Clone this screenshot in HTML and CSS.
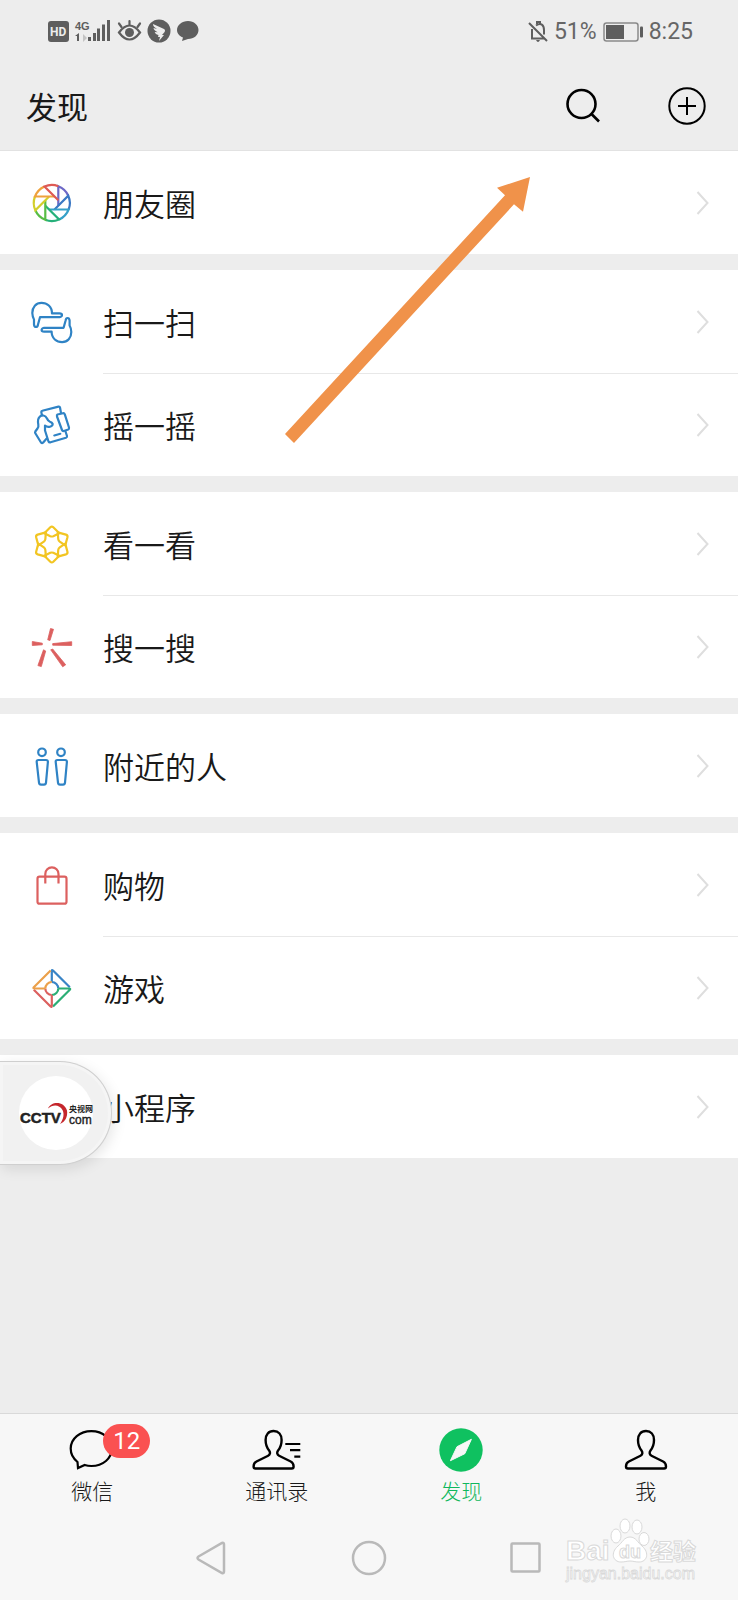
FILE: index.html
```html
<!DOCTYPE html>
<html lang="zh-CN">
<head>
<meta charset="utf-8">
<meta name="viewport" content="width=device-width, initial-scale=1">
<title>发现</title>
<link rel="stylesheet" href="styles.css">
</head>
<body>
<svg class="defs" aria-hidden="true">
  <symbol id="chevron" viewBox="0 0 14 26"><path d="M1.500 2l10 11-10 11" fill="none" stroke="#dedede" stroke-width="2"/></symbol>
  <path id="blade" d="M6.500 2.700V-16.800A18 18 0 0 1 16.500-7.300" fill="none" stroke-width="2.200"/>
  <path id="petal" d="M-1.500-17.200Q0-18.600 1.500-17.200L7.500-11.200L1.500-8.300Q0-7.700-1.500-8.300L-7.500-11.200Z"/>
  <path id="hand" d="M10 26.500L12 19.200H31.500Q34 18.600 34 17T31.500 15.400H24C24 8.500 19 4.800 13.500 4.800S4.300 9 4.300 15Q4.500 19 6 21.500V26.500Q6.300 29 8 29T10 26.500Z"/>
  <path id="person" d="M28.600 3c-5 0-8 3.500-8 9 0 5 1.500 8 3.500 10.500 1.500 2 1 4.200-1 5.200L11.500 33.500C9 34.700 8.600 36 8.600 38.500Q8.600 40.500 10.500 40.500H46.700Q48.600 40.500 48.600 38.500C48.600 36 48.200 34.700 45.700 33.500L34.100 27.700c-2-1-2.500-3.200-1-5.200 2-2.500 3.500-5.500 3.500-10.500 0-5.500-3-9-8-9z" fill="none" stroke="#000" stroke-width="2.400"/>
</svg>

<div class="status">
  <svg class="status-icons" viewBox="0 0 154 28" aria-label="HD 4G">
    <g fill="#5e5e5e">
      <rect x="0" y="4" width="21" height="21" rx="3"/>
      <text class="hd" x="2" y="19">HD</text>
      <text class="net" x="27" y="13">4G</text>
      <path d="M31 16v8h-2v-5h-2z"/><path d="M35 17v8l4-4z" fill="#c4c4c4"/>
      <rect x="40" y="20" width="3" height="4"/><rect x="45" y="16" width="3" height="8"/><rect x="49" y="11.500" width="3" height="12.500"/><rect x="54" y="7.500" width="3" height="16.500"/><rect x="59" y="3" width="3" height="21"/>
      <circle cx="81.500" cy="15.500" r="4.500"/>
      <circle cx="111" cy="14" r="11.500"/>
      <path d="M140 4c6 0 10.500 4 10.500 9s-4.500 9-10.500 9l-6 2 1-3.500c-3.500-1.500-6-4-6-7.500 0-5 5-9 11-9z"/>
    </g>
    <g fill="none" stroke="#5e5e5e" stroke-width="2.200" stroke-linecap="round">
      <path d="M71 15.500Q81.500 1.500 92 15.500Q81.500 29.500 71 15.500z"/>
      <path d="M81.500 4v3.500M71 6.500l2.500 3.500M92 6.500L89.500 10"/>
    </g>
    <path d="M105 7l11 5c1.500.8 1 2 .6 3l-2.600 3h2l-5 6 1-4h-2l.5-2c-2.500-.5-3.500-2-3.800-3l3 .3c-2.500-1.300-4-2.500-4.200-4.300l3.500 1c-2.500-1.500-4-3-4-5z" fill="#ededed"/>
  </svg>
  <div class="status-right">
    <svg class="bell" viewBox="0 0 20 22"><g fill="none" stroke="#5e5e5e" stroke-width="2"><path d="M1 2l18 18M3 17.500h14M4 17V8M8 4.500C13 1 16 4 16 9v4.500M9 3V1h3v2"/></g><path d="M8 19h4q-2 4-4 0" fill="#5e5e5e"/></svg>
    <span>51%</span>
    <svg class="battery" viewBox="0 0 40 20"><rect x="1" y="1" width="34" height="18" rx="2.500" fill="none" stroke="#8a8a8a" stroke-width="1.500"/><rect x="3" y="3" width="18" height="14" fill="#5e5e5e"/><rect x="37" y="4.500" width="3" height="11" rx="1" fill="#5e5e5e"/></svg>
    <time>8:25</time>
  </div>
</div>

<header class="header">
  <h1>发现</h1>
  <div class="actions">
    <button aria-label="搜索"><svg viewBox="0 0 40 40"><g fill="none" stroke="#000" stroke-width="2.600"><circle cx="18.500" cy="18" r="14"/><path d="M28 27.500l8 8"/></g></svg></button>
    <button aria-label="添加"><svg viewBox="0 0 40 40"><g fill="none" stroke="#000" stroke-width="2"><circle cx="20" cy="20" r="17.700"/><path d="M20 11v18M11 20h18"/></g></svg></button>
  </div>
</header>

<main class="list">
  <section>
    <a class="row" href="#moments">
      <svg class="icon" viewBox="0 0 48 48"><g transform="translate(23.800 24)"><use href="#blade" stroke="#6d68c6"/><use href="#blade" stroke="#3b78c4" transform="rotate(45)"/><use href="#blade" stroke="#35a0c8" transform="rotate(90)"/><use href="#blade" stroke="#26b07a" transform="rotate(135)"/><use href="#blade" stroke="#58bd45" transform="rotate(180)"/><use href="#blade" stroke="#d3cf2c" transform="rotate(225)"/><use href="#blade" stroke="#efa23c" transform="rotate(270)"/><use href="#blade" stroke="#de5a55" transform="rotate(315)"/></g></svg>
      <span>朋友圈</span><svg class="chevron"><use href="#chevron"/></svg>
    </a>
  </section>
  <section>
    <a class="row" href="#scan">
      <svg class="icon" viewBox="0 0 48 48"><g fill="none" stroke="#2f83c5" stroke-width="2.200" stroke-linejoin="round"><use href="#hand"/><use href="#hand" transform="rotate(180 23.800 24.500)"/></g></svg>
      <span>扫一扫</span><svg class="chevron"><use href="#chevron"/></svg>
    </a>
    <a class="row" href="#shake">
      <svg class="icon" viewBox="0 0 48 48"><g fill="none" stroke="#2f83c5" stroke-width="2.200" stroke-linejoin="round" stroke-linecap="round"><path d="M14 14.500L13.300 11Q13.300 10 14.300 9.800L30.500 5.600Q31.800 5.400 32 6.500L33 12"/><path d="M29.500 13.500L35 12.200Q36.300 12 36.800 13.300L41 26.500Q41.300 28 40.200 28.500L35.800 30Q34.500 30.300 34 29L29 15.500Q28.600 14 29.500 13.500Z"/><path d="M37.500 30.500L39 35Q39.200 36.300 38 36.800L22.500 41.300Q21 41.600 20.500 40.500L17 29.500V24.500Q19 26.500 22 25.700Q25 24.800 24.600 22.800Q24 21.500 22 20.800Q20 20 19 17.500C17.500 14 13.500 13.500 11.500 16C9.600 18 9.700 20.500 10.300 23.500Q10.800 26 9.500 27.500L7.300 30.500Q6.700 31.500 7.500 32.500L13 41.500Q14 42.500 15 41.700L18.700 37.500"/><path d="M26.300 34.500l6-1.700"/></g></svg>
      <span>摇一摇</span><svg class="chevron"><use href="#chevron"/></svg>
    </a>
  </section>
  <section>
    <a class="row" href="#look">
      <svg class="icon" viewBox="0 0 48 48"><g transform="translate(23.800 24.500)" fill="none" stroke="#f2c522" stroke-width="2.200" stroke-linejoin="round"><use href="#petal"/><use href="#petal" transform="rotate(60)"/><use href="#petal" transform="rotate(120)"/><use href="#petal" transform="rotate(180)"/><use href="#petal" transform="rotate(240)"/><use href="#petal" transform="rotate(300)"/></g></svg>
      <span>看一看</span><svg class="chevron"><use href="#chevron"/></svg>
    </a>
    <a class="row" href="#search">
      <svg class="icon" viewBox="0 0 48 48"><path fill="#dc605f" stroke="#dc605f" stroke-width=".8" stroke-linejoin="round" d="M22.500 5.500l3 .8L22 17.500l-2.300-.7zM4.300 18.500l10 1.700v1.600l-10 .7zM24.700 20.600l19-1.900v3.800l-19-.3zM15.500 26.800l2.200 1.200-4.400 15.600-3.400-1zM22.700 26.800l2-.8 13 15.800-3 2z"/></svg>
      <span>搜一搜</span><svg class="chevron"><use href="#chevron"/></svg>
    </a>
  </section>
  <section>
    <a class="row" href="#nearby">
      <svg class="icon" viewBox="0 0 48 48"><g fill="none" stroke="#2f83c5" stroke-width="2.200" stroke-linejoin="round"><circle cx="14" cy="10.300" r="3.800"/><circle cx="33" cy="10.300" r="3.800"/><path id="body" d="M10.500 18h7.500q2 0 1.900 2l-1.900 20.700q-.2 2-2 2h-3q-1.800 0-2-2L8.700 20q-.2-2 1.800-2z"/><use href="#body" x="19"/></g></svg>
      <span>附近的人</span><svg class="chevron"><use href="#chevron"/></svg>
    </a>
  </section>
  <section>
    <a class="row" href="#shop">
      <svg class="icon" viewBox="0 0 48 48"><g fill="none" stroke="#dc605f" stroke-width="2.200"><rect x="9.500" y="15.700" width="29" height="27" rx="2"/><path d="M17.300 22.500V13a6.600 6.600 0 0 1 13.200 0v9.500"/></g></svg>
      <span>购物</span><svg class="chevron"><use href="#chevron"/></svg>
    </a>
    <a class="row" href="#games">
      <svg class="icon" viewBox="0 0 48 48"><g transform="translate(23.800 24.500)" fill="none" stroke-width="2.200" stroke-linejoin="round"><path stroke="#3984c6" d="M0-6.500V-17.500Q0-19 1.200-18L18-1.200M0-6.500A6.500 6.500 0 0 1 6.500 0"/><path stroke="#2bae75" d="M6.500 0H17.500Q19 0 18 1.200L1.200 18M6.500 0A6.500 6.500 0 0 1 0 6.500"/><path stroke="#dc605f" d="M0 6.500V17.500Q0 19-1.200 18L-18 1.200M0 6.500A6.500 6.500 0 0 1-6.500 0"/><path stroke="#eba04a" d="M-6.500 0H-17.500Q-19 0-18-1.200L-1.200-18M-6.500 0A6.500 6.500 0 0 1 0-6.500"/></g></svg>
      <span>游戏</span><svg class="chevron"><use href="#chevron"/></svg>
    </a>
  </section>
  <section class="mini">
    <a class="row" href="#mini">
      <i class="icon"></i>
      <span>小程序</span><svg class="chevron"><use href="#chevron"/></svg>
    </a>
    <button class="float" aria-label="CCTV.com 央视网">
      <svg viewBox="0 0 76 76"><circle cx="38" cy="37" r="37" fill="#fff"/><path d="M30 32.500C33 25 46 24.500 49 34.500C50 41 47 46 42 48C45.500 43 46.500 38 44.500 34C41.500 28.500 35 28 30 32.500z" fill="#c5262c"/><text class="cctv" x="2" y="47">CCTV</text><text class="com" x="51" y="48">com</text><text class="cn" x="51" y="36">央视网</text></svg>
    </button>
  </section>
</main>

<footer class="footer">
  <nav class="tabs">
    <a href="#chats"><span class="tab-icon"><svg viewBox="0 0 64 44"><path d="M31.400 3.200c11.500 0 20.400 7.500 20.400 17.400S43 38 31.400 38c-2.500 0-4.500-.3-6.700-1L18 40l-.5-6c-4.200-3.300-6.800-8-6.800-13.400 0-9.900 9.200-17.400 20.700-17.400z" fill="none" stroke="#000" stroke-width="2.200"/></svg><b class="badge">12</b></span>微信</a>
    <a href="#contacts"><span class="tab-icon"><svg viewBox="0 0 64 44"><use href="#person"/><path d="M40.300 16h15M45 22.200h10.300M49.300 28.700h6" stroke="#000" stroke-width="2.200"/></svg></span>通讯录</a>
    <a class="active" href="#discover"><span class="tab-icon"><svg viewBox="0 0 64 44"><circle cx="32" cy="22" r="21.700" fill="#0fc160"/><path d="M42.400 11.300L35.800 25.700 21.400 32.700 28 18.700z" fill="#f7f7f7" stroke="#f7f7f7" stroke-linejoin="round"/></svg></span>发现</a>
    <a href="#me"><span class="tab-icon"><svg viewBox="0 0 64 44"><use href="#person" x="3.400"/></svg></span>我</a>
  </nav>
  <div class="system">
    <button aria-label="返回"><svg viewBox="0 0 36 36"><path d="M4.500 16.500L28 3q2-.8 2 1.500v27q0 2.300-2 1.500L4.500 19.500q-2-1.500 0-3z"/></svg></button>
    <button aria-label="主页"><svg viewBox="0 0 36 36"><circle cx="18" cy="18" r="16"/></svg></button>
    <button aria-label="最近任务"><svg viewBox="0 0 36 36"><rect x="3.500" y="3.500" width="28" height="28" rx="1"/></svg></button>
  </div>
  <svg class="watermark" viewBox="0 0 140 72" aria-label="Baidu 经验">
    <g fill="#fff" stroke="#d9d9d9">
      <text class="bai" x="6" y="48">Bai</text>
      <ellipse cx="56" cy="24" rx="5" ry="7"/><ellipse cx="65" cy="14" rx="5" ry="7"/><ellipse cx="77" cy="15" rx="5" ry="7"/><ellipse cx="84" cy="27" rx="5" ry="6.500"/>
      <path d="M70 25c6 0 8 6 12 9 8 7 5 16-3 16-4 0-6-1-9-1s-5 1-9 1c-8 0-11-9-3-16 4-3 6-9 12-9z"/>
      <text class="du" x="59" y="46">du</text>
      <text class="jy" x="90" y="48">经验</text>
      <text class="url" x="6" y="67">jingyan.baidu.com</text>
    </g>
  </svg>
</footer>

<svg class="arrow" viewBox="0 0 246 268" aria-hidden="true"><path d="M0 257L9 266 229 27.300 238 34.700 245 0 212 10.700 220 18.300z" fill="#f0924a"/></svg>
</body>
</html>
```
FILE: styles.css
```css
* { box-sizing: border-box; }

body {
  position: relative;
  display: flex;
  flex-direction: column;
  min-height: 100vh;
  margin: 0;
  background: #ededed;
  color: #191919;
  font-family: "Noto Sans CJK SC", sans-serif;
}

a { color: inherit; text-decoration: none; }

button {
  display: block;
  padding: 0;
  border: 0;
  background: none;
}

svg { display: block; }

.defs { position: absolute; width: 0; height: 0; }

.status {
  display: flex;
  align-items: center;
  justify-content: space-between;
  height: 62px;
  padding: 2px 45px 0 48px;
  color: #666;
  font: 23px/28px Roboto, sans-serif;
}

.status-icons { width: 154px; height: 28px; margin-bottom: 2px; }
.hd { fill: #ededed; font: bold 12px Roboto, sans-serif; }
.net { font: bold 11px "Liberation Sans", sans-serif; }
.status-right { display: flex; align-items: center; gap: 6px; }
.bell { width: 20px; height: 22px; }
.battery { width: 40px; height: 20px; }

.header {
  display: flex;
  align-items: center;
  justify-content: space-between;
  height: 89px;
  padding: 0 31px 0 26px;
  border-bottom: 1px solid #e2e2e2;
}

.header h1 { margin: 0; font-size: 31px; font-weight: 400; line-height: 40px; }
.actions { display: flex; gap: 64px; }
.actions svg { width: 40px; height: 40px; }

.list { display: flex; flex: 1; flex-direction: column; gap: 16px; }
.list section { position: relative; background: #fff; }

.row {
  position: relative;
  display: flex;
  align-items: center;
  height: 103px;
  padding: 0 28px;
  font-size: 31px;
  font-weight: 350;
  line-height: 40px;
}

.row + .row::before {
  position: absolute;
  top: 0;
  right: 0;
  left: 103px;
  height: 1px;
  background: #e8e8e8;
  content: "";
}

.row span { flex: 1; }
.icon { width: 48px; height: 48px; margin-right: 27px; }
.chevron { width: 14px; height: 26px; }

.float {
  position: absolute;
  top: 6px;
  left: 0;
  width: 112px;
  height: 104px;
  padding: 14px 18px;
  border: 1px solid #cfcfcf;
  border-left: 0;
  border-radius: 0 52px 52px 0;
  background: #f1f1f1;
  box-shadow: inset 0 0 0 3px #f5f5f5, 2px 4px 14px rgba(0, 0, 0, 0.1);
}

.float svg { width: 76px; height: 76px; }
.cctv { fill: #222; font: bold 15px "Liberation Sans", sans-serif; stroke: #222; stroke-width: 0.500px; }
.com { fill: #222; font: 12px "Liberation Sans", sans-serif; stroke: #222; stroke-width: 0.400px; }
.cn { fill: #222; font: bold 8px "Noto Sans CJK SC", sans-serif; }

.footer { position: relative; border-top: 1px solid #d9d9d9; background: #f7f7f7; }
.tabs { display: grid; grid-template-columns: repeat(4, 1fr); padding: 14px 0 11px; }

.tabs a {
  display: flex;
  flex-direction: column;
  align-items: center;
  gap: 4px;
  font-size: 21px;
  font-weight: 300;
  line-height: 28px;
}

.tabs .active { color: #0fb75d; }
.tab-icon { position: relative; }
.tab-icon svg { width: 64px; height: 44px; }

.badge {
  position: absolute;
  top: -4px;
  left: 43px;
  width: 47px;
  height: 34px;
  border-radius: 17px;
  background: #fa5151;
  color: #fff;
  font: 24px/35px Roboto, sans-serif;
  text-align: center;
}

.system {
  display: flex;
  align-items: center;
  justify-content: center;
  gap: 121px;
  height: 85px;
}

.system svg { width: 36px; height: 36px; fill: none; stroke: #b9b9b9; stroke-width: 2.500px; }

.watermark { position: absolute; right: 38px; bottom: 16px; width: 140px; height: 72px; }
.bai { font: bold 28px "Liberation Sans", sans-serif; }
.du { font: bold 18px "Liberation Sans", sans-serif; }
.jy { font: bold 23px "Noto Sans CJK SC", sans-serif; }
.url { stroke-width: 0.800px; font: 16px "Liberation Sans", sans-serif; }

.arrow { position: absolute; top: 177px; left: 285px; width: 246px; height: 268px; pointer-events: none; }
```
